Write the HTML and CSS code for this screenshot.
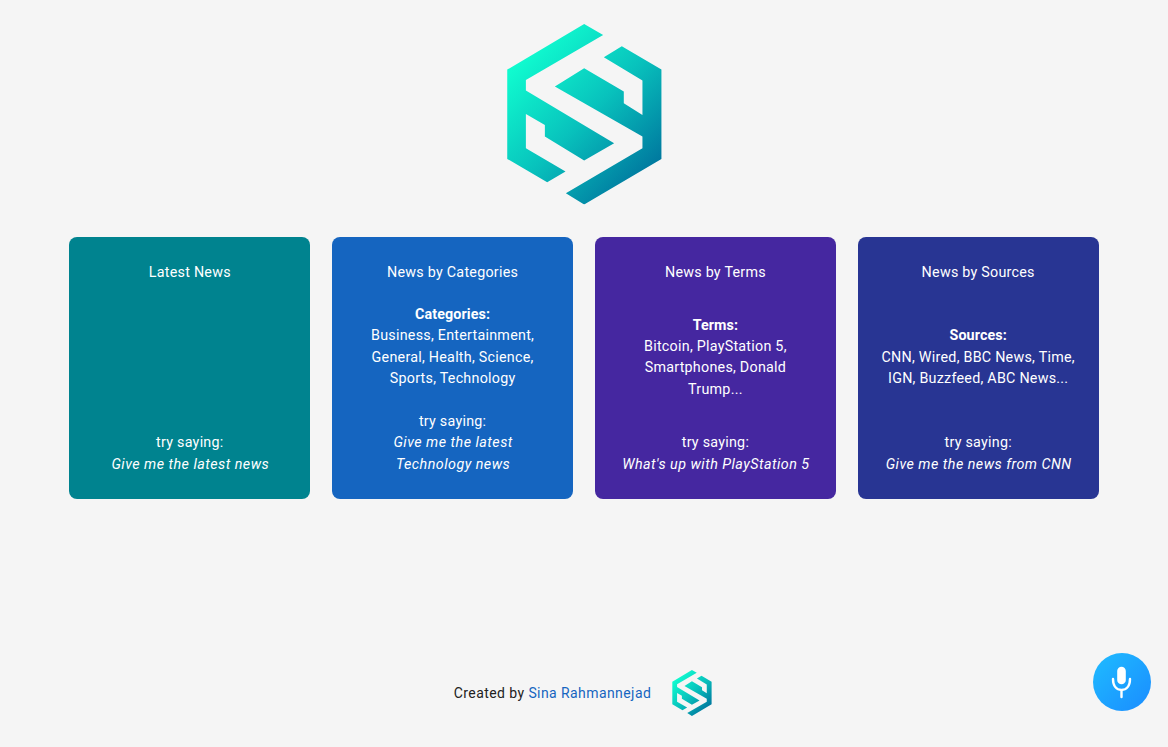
FILE: index.html
```html
<!DOCTYPE html>
<html lang="en">
<head>
    <meta charset="UTF-8">
    <meta name="viewport" content="width=device-width, initial-scale=1.0">
    <title>News Assistant</title>
    <link rel="stylesheet" href="styles.css">
</head>
<body>
    <header class="logo-wrap">
        <svg class="logo" aria-label="Logo">
            <defs>
                <linearGradient id="logoGrad" gradientUnits="userSpaceOnUse" x1="110" y1="130" x2="470" y2="490">
                    <stop offset="0" stop-color="#10fbcf"/>
                    <stop offset="0.5" stop-color="#08c3bd"/>
                    <stop offset="1" stop-color="#00799f"/>
                </linearGradient>
                <symbol id="logoMark" viewBox="52 40 464 542">
                    <polygon fill="url(#logoGrad)" points="283,40 340,73 108,208 108,240 373,398 283,450 165,378 165,343 108,310 108,413 227,483 172,515 52,445 52,177"/>
                    <polygon fill="url(#logoGrad)" points="396,107 515,177 515,445 283,582 228,548 458,413 458,378 195,228 283,173 402,243 402,278 458,313 458,210 342,140"/>
                </symbol>
            </defs>
            <use href="#logoMark"/>
        </svg>
    </header>

    <main class="cards">
        <section class="card card-teal">
            <div class="card-title">Latest News</div>
            <div></div>
            <div>
                <p>try saying:</p>
                <p class="phrase">Give me the latest news</p>
            </div>
        </section>
        <section class="card card-blue">
            <div class="card-title">News by Categories</div>
            <div>
                <p class="label">Categories:</p>
                <p>Business, Entertainment, General, Health, Science, Sports, Technology</p>
            </div>
            <div>
                <p>try saying:</p>
                <p class="phrase">Give me the latest Technology news</p>
            </div>
        </section>
        <section class="card card-purple">
            <div class="card-title">News by Terms</div>
            <div>
                <p class="label">Terms:</p>
                <p>Bitcoin, PlayStation 5, Smartphones, Donald Trump...</p>
            </div>
            <div>
                <p>try saying:</p>
                <p class="phrase">What's up with PlayStation 5</p>
            </div>
        </section>
        <section class="card card-indigo">
            <div class="card-title">News by Sources</div>
            <div>
                <p class="label">Sources:</p>
                <p>CNN, Wired, BBC News, Time, IGN, Buzzfeed, ABC News...</p>
            </div>
            <div>
                <p>try saying:</p>
                <p class="phrase">Give me the news from CNN</p>
            </div>
        </section>
    </main>

    <footer class="footer">
        <span>Created by <a href="#">Sina Rahmannejad</a></span>
        <svg class="logo-small"><use href="#logoMark"/></svg>
    </footer>

    <button class="mic-button" aria-label="Microphone">
        <svg viewBox="0 0 58 58" width="58" height="58">
            <rect x="24.2" y="13.7" width="8.6" height="17.6" rx="4.3" fill="#fff"/>
            <path d="M20 26c0 7 3.5 11 8.500 11S37 33 37 26M28.500 37v7" fill="none" stroke="#fff" stroke-width="2.400" stroke-linecap="round"/>
        </svg>
    </button>
</body>
</html>
```

FILE: styles.css
```css
body {
    margin: 0;
    min-height: 100vh;
    box-sizing: border-box;
    display: flex;
    flex-direction: column;
    background-color: #f5f5f5;
    font-family: Roboto, "Liberation Sans", sans-serif;
    font-size: 14.3px;
    line-height: 1.5;
    letter-spacing: 0.25px;
}

p {
    margin: 0;
}

.logo-wrap {
    display: flex;
    justify-content: center;
    padding-top: 24px;
}

.logo {
    display: block;
    width: 155px;
    height: 180.5px;
}

.cards {
    display: grid;
    grid-template-columns: repeat(4, 241.3px);
    gap: 21.5px;
    justify-content: center;
    margin-top: 32.8px;
}

.card {
    height: 261.4px;
    box-sizing: border-box;
    padding: 24px 24px 23.6px;
    border-radius: 8px;
    display: flex;
    flex-direction: column;
    justify-content: space-between;
    color: #fff;
    text-align: center;
}

.card-title {
    padding-top: 0.6px;
    margin-bottom: -0.6px;
}

.card-teal {
    background-color: #00838f;
}

.card-blue {
    background-color: #1565c0;
}

.card-purple {
    background-color: #4527a0;
}

.card-indigo {
    background-color: #283593;
}

.label {
    font-weight: 700;
    letter-spacing: 0.1px;
}

.phrase {
    padding-left: 1px;
    font-style: italic;
    letter-spacing: 0.47px;
}

.footer {
    margin-top: auto;
    padding: 0 2px 31px 0;
    display: flex;
    justify-content: center;
    align-items: center;
    gap: 21px;
    font-size: 14px;
    letter-spacing: 0.42px;
    color: #212121;
}

.footer a {
    color: #1565c0;
    text-decoration: none;
}

.logo-small {
    display: block;
    width: 40px;
    height: 46px;
}

.mic-button {
    position: fixed;
    right: 17px;
    bottom: 36px;
    width: 58px;
    height: 58px;
    padding: 0;
    border: none;
    border-radius: 50%;
    background: linear-gradient(135deg, #1fbcff, #1a8cff);
}

.mic-button svg {
    display: block;
}
```
